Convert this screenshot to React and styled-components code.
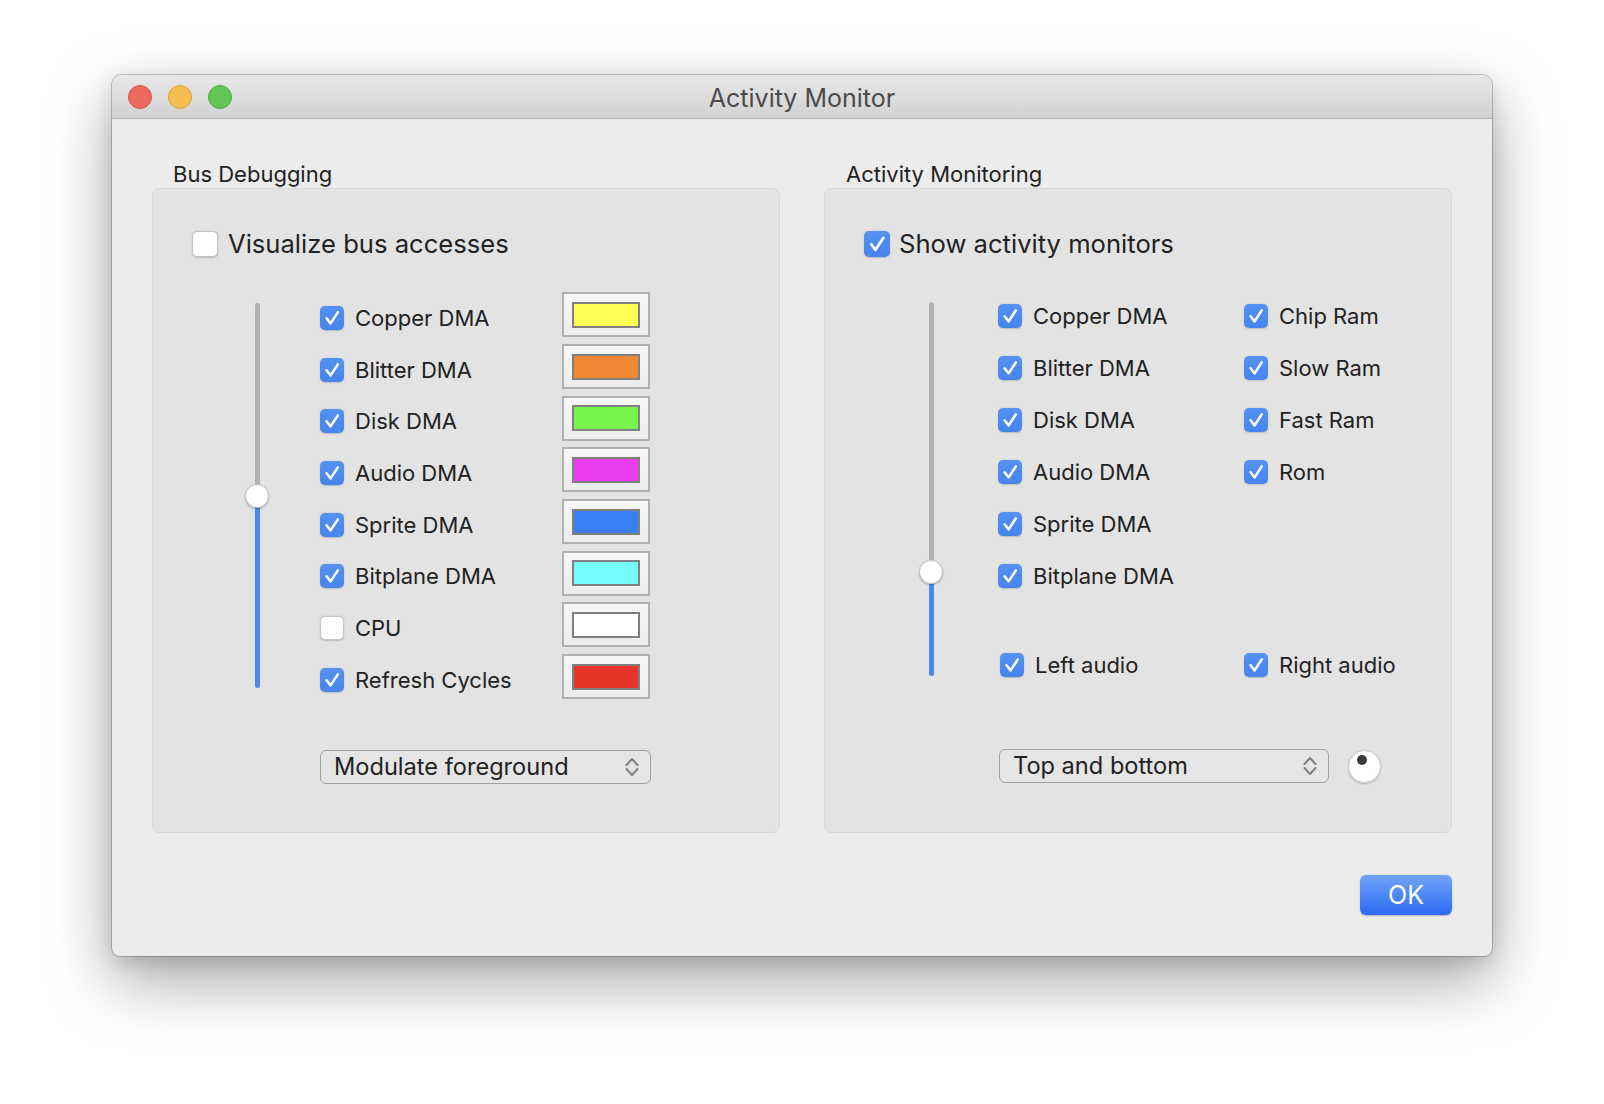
import React from 'react';
import styled, { createGlobalStyle } from 'styled-components';

const GlobalStyle = createGlobalStyle`
  html, body { margin: 0; padding: 0; background: #ffffff; }
  body {
    width: 1604px; height: 1104px; overflow: hidden;
    font-family: Inter, "Liberation Sans", sans-serif;
    color: #222222;
    -webkit-font-smoothing: antialiased;
  }
  * { box-sizing: border-box; }
`;

const Page = styled.div`
  padding: 75px 0 0 112px;
`;

const Window = styled.div`
  width: 1380px;
  height: 881px;
  background: #ececec;
  border-radius: 10px 10px 8px 8px;
  box-shadow: 0 0 0 1px rgba(0, 0, 0, 0.2), 0 24px 64px rgba(0, 0, 0, 0.36), 0 6px 18px rgba(0, 0, 0, 0.12);
  overflow: hidden;
  display: flex;
  flex-direction: column;
`;

const TitleBar = styled.div`
  height: 44px;
  flex: none;
  display: grid;
  grid-template-columns: 1fr auto 1fr;
  align-items: center;
  padding: 0 16px;
  background: linear-gradient(#e9e8e9, #d3d2d3);
  border-bottom: 1px solid #b3b3b3;
`;

const Lights = styled.div`
  display: flex;
  gap: 16px;
`;

const Light = styled.span`
  width: 24px;
  height: 24px;
  border-radius: 50%;
  background: ${p => p.$fill};
  border: 1px solid ${p => p.$edge};
`;

const Title = styled.div`
  font-size: 25px;
  line-height: 30px;
  color: #4b4b4b;
  padding-top: 3px;
`;

const Content = styled.div`
  flex: 1;
  display: flex;
  flex-direction: column;
  padding: 42px 40px 0;
`;

const Groups = styled.div`
  display: grid;
  grid-template-columns: 628px 628px;
  column-gap: 44px;
`;

const Group = styled.section`
  display: flex;
  flex-direction: column;
`;

const GroupLabel = styled.div`
  font-size: 22px;
  line-height: 26px;
  margin-bottom: 1px;
  padding-left: ${p => p.$indent}px;
  color: #222222;
`;

const GroupBox = styled.div`
  height: 645px;
  background: #e3e3e3;
  border: 1px solid #d9d9d9;
  border-radius: 7px;
  padding: 42px 0 0 39px;
  display: flex;
  flex-direction: column;
`;

const CheckRow = styled.label`
  display: flex;
  align-items: center;
  gap: ${p => p.$gap || 11}px;
  font-size: ${p => p.$size || 22}px;
  line-height: 26px;
  color: #222222;
  white-space: nowrap;
  padding-left: ${p => p.$shift || 0}px;
`;

const Box = styled.span`
  flex: none;
  width: ${p => p.$size}px;
  height: ${p => p.$size}px;
  border-radius: 5px;
  display: flex;
  align-items: center;
  justify-content: center;
  background: ${p => (p.$checked ? 'linear-gradient(#5592f3, #4683ec)' : '#ffffff')};
  border: ${p => (p.$checked ? 'none' : '1px solid #c3c3c3')};
  box-shadow: 0 0.5px 1.5px rgba(0, 0, 0, 0.18);
`;

const Check = ({ checked, size = 24 }) => (
  <Box $checked={checked} $size={size}>
    {checked && (
      <svg width={size} height={size} viewBox="0 0 24 24">
        <path d="M6.6 12.2 L10.6 17.4 L17.8 6.4" fill="none" stroke="#ffffff" strokeWidth="2.5" strokeLinecap="round" strokeLinejoin="round" />
      </svg>
    )}
  </Box>
);

const CheckItem = ({ checked, label, big, gap }) => (
  <CheckRow $size={big ? 25.6 : 22} $gap={gap}>
    <Check checked={checked} size={big ? 26 : 24} />
    <span>{label}</span>
  </CheckRow>
);

const Body = styled.div`
  display: flex;
  margin-top: ${p => p.$top}px;
`;

const SliderCol = styled.div`
  flex: none;
  width: ${p => p.$width}px;
  padding-top: ${p => p.$pad}px;
  padding-left: ${p => p.$inset}px;
`;

const Track = styled.div`
  position: relative;
  width: 5px;
  height: ${p => p.$length}px;
  border-radius: 3px;
  background: linear-gradient(to bottom, #b2b2b2 0, #b2b2b2 ${p => p.$pos}px, #4a87ee ${p => p.$pos}px, #4a87ee 100%);
`;

const Knob = styled.span`
  position: absolute;
  left: -9.5px;
  top: ${p => p.$pos - 12}px;
  width: 24px;
  height: 24px;
  border-radius: 50%;
  background: #ffffff;
  border: 1px solid #c4c4c4;
  box-shadow: 0 1px 2px rgba(0, 0, 0, 0.25);
`;

const Slider = ({ width, inset, pad, length, pos }) => (
  <SliderCol $width={width} $inset={inset} $pad={pad}>
    <Track $length={length} $pos={pos}>
      <Knob $pos={pos} />
    </Track>
  </SliderCol>
);

const ListCol = styled.div`
  display: flex;
  flex-direction: column;
`;

const ColorRows = styled.div`
  display: grid;
  grid-template-columns: 330px;
  grid-auto-rows: 51.7px;
`;

const ColorRow = styled.div`
  display: grid;
  grid-template-columns: 1fr 88px;
  align-items: center;
`;

const Well = styled.div`
  width: 88px;
  height: 45px;
  margin-bottom: 6px;
  border: 2px solid #b0b0b0;
  background: linear-gradient(#f7f7f7, #ececec);
  display: flex;
  align-items: center;
  justify-content: center;
`;

const Swatch = styled.div`
  width: 68px;
  height: 26px;
  border: 2px solid #808080;
  background: ${p => p.$color};
`;

const Popup = styled.div`
  width: ${p => p.$width}px;
  height: 34px;
  margin-top: ${p => p.$top || 0}px;
  border: 1.5px solid #a0a0a0;
  border-radius: 6px;
  background: #e5e5e5;
  display: flex;
  align-items: center;
  justify-content: space-between;
  padding: 0 10px 0 13px;
  font-size: 23.6px;
  line-height: 26px;
  color: #222222;
`;

const Arrows = () => (
  <svg width="16" height="22" viewBox="0 0 16 22">
    <path d="M2.5 9 L8 3 L13.5 9" fill="none" stroke="#808080" strokeWidth="2" strokeLinecap="round" strokeLinejoin="round" />
    <path d="M2.5 13 L8 19 L13.5 13" fill="none" stroke="#808080" strokeWidth="2" strokeLinecap="round" strokeLinejoin="round" />
  </svg>
);

const MonitorGrid = styled.div`
  display: grid;
  grid-template-columns: 246px 246px;
  grid-template-rows: repeat(6, 52px);
  grid-auto-flow: column;
  align-items: center;
`;

const AudioRow = styled.div`
  display: grid;
  grid-template-columns: 244px 246px;
  height: 52px;
  align-items: center;
  margin-top: 37px;
  padding-left: 2px;
`;

const PopupRow = styled.div`
  display: flex;
  align-items: center;
  gap: 19px;
  margin-top: 58px;
  padding-left: 1px;
`;

const Dial = styled.span`
  position: relative;
  width: 33px;
  height: 33px;
  border-radius: 50%;
  background: radial-gradient(circle at 50% 40%, #ffffff 60%, #f2f2f2 100%);
  border: 1px solid #cacaca;
  box-shadow: 0 1px 2px rgba(0, 0, 0, 0.22);
  &::after {
    content: '';
    position: absolute;
    left: 8px;
    top: 4px;
    width: 10px;
    height: 10px;
    border-radius: 50%;
    background: #3a3a3a;
  }
`;

const Footer = styled.div`
  display: flex;
  justify-content: flex-end;
  margin-top: 42px;
`;

const OkButton = styled.button`
  width: 92px;
  height: 40px;
  border: none;
  border-radius: 6px;
  background: linear-gradient(#72a4f8, #2b6bf5);
  box-shadow: 0 0.5px 1.5px rgba(0, 0, 0, 0.25);
  color: #ffffff;
  font-family: Inter, "Liberation Sans", sans-serif;
  font-size: 25px;
  line-height: 40px;
  padding: 0;
`;

const busRows = [
  { label: 'Copper DMA', checked: true, color: '#ffff55' },
  { label: 'Blitter DMA', checked: true, color: '#f08733' },
  { label: 'Disk DMA', checked: true, color: '#77f54a' },
  { label: 'Audio DMA', checked: true, color: '#ea3df0' },
  { label: 'Sprite DMA', checked: true, color: '#3a80f5' },
  { label: 'Bitplane DMA', checked: true, color: '#74fcfd' },
  { label: 'CPU', checked: false, color: '#ffffff' },
  { label: 'Refresh Cycles', checked: true, color: '#e8352a' },
];

const monitors = [
  'Copper DMA', 'Blitter DMA', 'Disk DMA', 'Audio DMA', 'Sprite DMA', 'Bitplane DMA',
  'Chip Ram', 'Slow Ram', 'Fast Ram', 'Rom',
];

export default function App() {
  return (
    <>
      <GlobalStyle />
      <Page>
        <Window>
          <TitleBar>
            <Lights>
              <Light $fill="#ee6a5f" $edge="#d65548" />
              <Light $fill="#f6be50" $edge="#d9a23f" />
              <Light $fill="#62c655" $edge="#50a840" />
            </Lights>
            <Title>Activity Monitor</Title>
            <span />
          </TitleBar>
          <Content>
            <Groups>
              <Group>
                <GroupLabel $indent={21}>Bus Debugging</GroupLabel>
                <GroupBox>
                  <CheckItem checked={false} label="Visualize bus accesses" big gap={10} />
                  <Body $top={35}>
                    <Slider width={128} inset={62.5} pad={11} length={385} pos={193} />
                    <ListCol>
                      <ColorRows>
                        {busRows.map(r => (
                          <ColorRow key={r.label}>
                            <CheckItem checked={r.checked} label={r.label} />
                            <Well>
                              <Swatch $color={r.color} />
                            </Well>
                          </ColorRow>
                        ))}
                      </ColorRows>
                      <Popup $width={331} $top={44}>
                        <span>Modulate foreground</span>
                        <Arrows />
                      </Popup>
                    </ListCol>
                  </Body>
                </GroupBox>
              </Group>
              <Group>
                <GroupLabel $indent={22}>Activity Monitoring</GroupLabel>
                <GroupBox>
                  <CheckItem checked label="Show activity monitors" big gap={9} />
                  <Body $top={33}>
                    <Slider width={134} inset={64.5} pad={12} length={374} pos={270} />
                    <ListCol>
                      <MonitorGrid>
                        {monitors.map(m => (
                          <CheckItem key={m} checked label={m} />
                        ))}
                      </MonitorGrid>
                      <AudioRow>
                        <CheckItem checked label="Left audio" />
                        <CheckItem checked label="Right audio" />
                      </AudioRow>
                      <PopupRow>
                        <Popup $width={330}>
                          <span>Top and bottom</span>
                          <Arrows />
                        </Popup>
                        <Dial />
                      </PopupRow>
                    </ListCol>
                  </Body>
                </GroupBox>
              </Group>
            </Groups>
            <Footer>
              <OkButton>OK</OkButton>
            </Footer>
          </Content>
        </Window>
      </Page>
    </>
  );
}
